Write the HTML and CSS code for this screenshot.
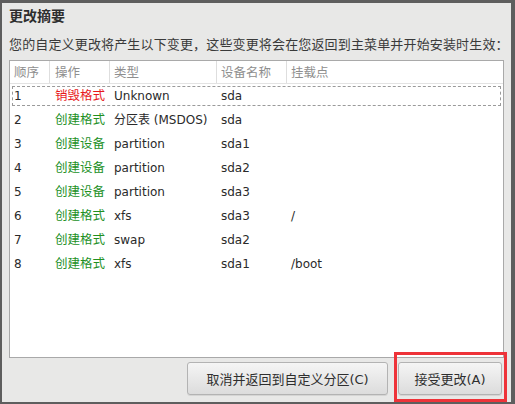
FILE: index.html
```html
<!DOCTYPE html>
<html lang="zh-CN">
<head>
<meta charset="utf-8">
<title>更改摘要</title>
<link rel="stylesheet" href="styles.css">
</head>
<body>
<div class="dialog">
  <div class="title">更改摘要</div>
  <div class="subtitle">您的自定义更改将产生以下变更，这些变更将会在您返回到主菜单并开始安装时生效：</div>
  <div class="table">
    <div class="row head">
      <div class="cell">顺序</div>
      <div class="cell c2">操作</div>
      <div class="cell">类型</div>
      <div class="cell">设备名称</div>
      <div class="cell last">挂载点</div>
    </div>
    <div class="row focus">
      <div class="cell">1</div>
      <div class="cell c2 red">销毁格式</div>
      <div class="cell">Unknown</div>
      <div class="cell">sda</div>
      <div class="cell"></div>
    </div>
    <div class="row">
      <div class="cell">2</div>
      <div class="cell c2 green">创建格式</div>
      <div class="cell">分区表 (MSDOS)</div>
      <div class="cell">sda</div>
      <div class="cell"></div>
    </div>
    <div class="row">
      <div class="cell">3</div>
      <div class="cell c2 green">创建设备</div>
      <div class="cell">partition</div>
      <div class="cell">sda1</div>
      <div class="cell"></div>
    </div>
    <div class="row">
      <div class="cell">4</div>
      <div class="cell c2 green">创建设备</div>
      <div class="cell">partition</div>
      <div class="cell">sda2</div>
      <div class="cell"></div>
    </div>
    <div class="row">
      <div class="cell">5</div>
      <div class="cell c2 green">创建设备</div>
      <div class="cell">partition</div>
      <div class="cell">sda3</div>
      <div class="cell"></div>
    </div>
    <div class="row">
      <div class="cell">6</div>
      <div class="cell c2 green">创建格式</div>
      <div class="cell">xfs</div>
      <div class="cell">sda3</div>
      <div class="cell">/</div>
    </div>
    <div class="row">
      <div class="cell">7</div>
      <div class="cell c2 green">创建格式</div>
      <div class="cell">swap</div>
      <div class="cell">sda2</div>
      <div class="cell"></div>
    </div>
    <div class="row">
      <div class="cell">8</div>
      <div class="cell c2 green">创建格式</div>
      <div class="cell">xfs</div>
      <div class="cell">sda1</div>
      <div class="cell">/boot</div>
    </div>
  </div>
  <div class="buttons">
    <button class="btn cancel">取消并返回到自定义分区(C)</button>
    <button class="btn accept">接受更改(A)</button>
  </div>
  <div class="highlight"></div>
</div>
</body>
</html>
```

FILE: styles.css
```css
html, body {
  margin: 0;
  padding: 0;
}
body {
  width: 515px;
  height: 404px;
  box-sizing: border-box;
  padding: 3px 4px 0 2px;
  background: #5e5e5e;
  overflow: hidden;
  font-family: "DejaVu Sans", "Noto Sans CJK SC", sans-serif;
}
.dialog {
  position: relative;
  height: 399px;
  background: #e8e8e7;
  padding: 0 7px;
  box-sizing: border-box;
  overflow: hidden;
}
.title {
  padding-top: 3px;
  height: 20px;
  line-height: 20px;
  font-size: 14px;
  font-weight: bold;
  color: #2e2e2e;
}
.subtitle {
  margin-top: 9px;
  height: 20px;
  line-height: 20px;
  font-size: 13px;
  letter-spacing: 0.15px;
  color: #3a3a3a;
  white-space: nowrap;
}
.table {
  margin-top: 5px;
  height: 298px;
  box-sizing: border-box;
  background: #fff;
  border: 1px solid #a9a9a9;
}
.row {
  position: relative;
  display: grid;
  grid-template-columns: 40px 60px 107px 70px 1fr;
  height: 24px;
  line-height: 24px;
  font-size: 12px;
  color: #2a2a2a;
}
.cell {
  padding-left: 4px;
  white-space: nowrap;
  overflow: hidden;
}
.cell.c2 {
  padding-left: 5px;
}
.head {
  height: 23px;
  line-height: 23px;
  color: #8e8e8e;
  font-size: 12.5px;
  border-bottom: 1px solid #e3e3e3;
  box-sizing: border-box;
}
.head .cell {
  border-right: 1px solid #dedede;
}
.head .cell.last {
  border-right: none;
}
.focus::after {
  content: "";
  position: absolute;
  left: 2px;
  right: 2px;
  top: 2px;
  bottom: 2px;
  border: 1px dashed #9a9a9a;
}
.red {
  color: #e8191b;
  font-size: 12.5px;
}
.green {
  color: #22901f;
  font-size: 12.5px;
}
.buttons {
  display: flex;
  justify-content: flex-end;
  gap: 10px;
  margin-top: 4px;
  padding-right: 2px;
}
.btn {
  height: 33px;
  font-family: "DejaVu Sans", "Noto Sans CJK SC", sans-serif;
  font-size: 13px;
  color: #2e2e2e;
  background: linear-gradient(#f5f5f5, #dcdcdc);
  border: 1px solid #b3b3b3;
  border-radius: 3px;
  box-shadow: 0 1px 0 rgba(0,0,0,0.08);
  padding: 0;
}
.cancel {
  width: 201px;
}
.accept {
  width: 104px;
}
.highlight {
  position: absolute;
  left: 392px;
  top: 349px;
  width: 113px;
  height: 50px;
  box-sizing: border-box;
  border: 3px solid #ee3339;
}
```
